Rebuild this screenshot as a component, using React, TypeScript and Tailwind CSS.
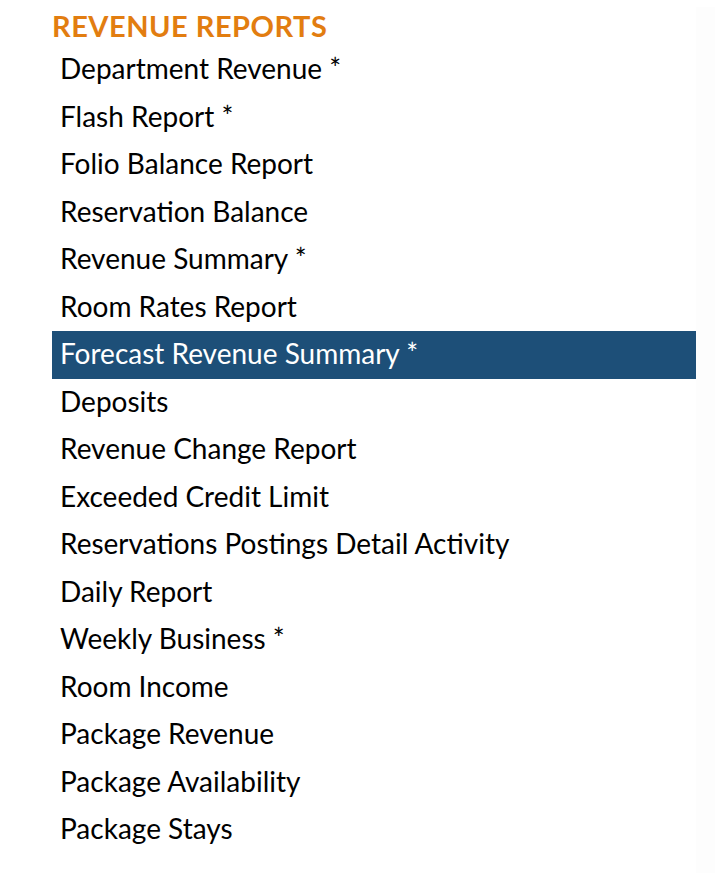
import React from 'react';

const reports = [
  { name: 'Department Revenue', star: true },
  { name: 'Flash Report', star: true },
  { name: 'Folio Balance Report' },
  { name: 'Reservation Balance' },
  { name: 'Revenue Summary', star: true },
  { name: 'Room Rates Report' },
  { name: 'Forecast Revenue Summary', star: true },
  { name: 'Deposits' },
  { name: 'Revenue Change Report' },
  { name: 'Exceeded Credit Limit' },
  { name: 'Reservations Postings Detail Activity' },
  { name: 'Daily Report' },
  { name: 'Weekly Business', star: true },
  { name: 'Room Income' },
  { name: 'Package Revenue' },
  { name: 'Package Availability' },
  { name: 'Package Stays' },
];

const App: React.FC = () => {
  const selected = 'Forecast Revenue Summary';

  return (
    <div className="flex min-h-[873px] bg-white" style={{ fontFamily: 'Lato, "Open Sans", sans-serif' }}>
      <div className="w-[696px] pl-[52px]">
        <h2 className="pt-[10px] pb-[4px] text-[29px] leading-[32px] tracking-[0.5px] font-bold text-[#e27d10]">
          REVENUE REPORTS
        </h2>
        <ul>
          {reports.map((r) => (
            <li
              key={r.name}
              className={
                r.name === selected
                  ? 'h-[47.5px] pl-[8px] text-[28px] leading-[45.5px] bg-[#1d4f78] text-white'
                  : 'h-[47.5px] pl-[8px] text-[28px] leading-[45.5px] text-black'
              }
            >
              {r.name}
              {r.star ? ' *' : ''}
            </li>
          ))}
        </ul>
      </div>
      <div className="mt-[7px] w-[19px] bg-[#fdfdfd]" />
    </div>
  );
};

export default App;
